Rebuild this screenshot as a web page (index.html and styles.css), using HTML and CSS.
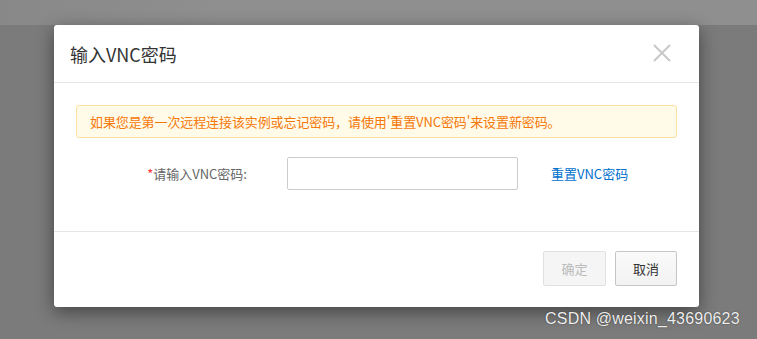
FILE: index.html
```html
<!DOCTYPE html>
<html lang="zh-CN">
<head>
<meta charset="utf-8">
<title>输入VNC密码</title>
<link rel="stylesheet" href="styles.css">
</head>
<body>
<div class="topbar"></div>
<div class="stage">
  <div class="modal">
    <div class="modal-header">
      <h3 class="modal-title">输入VNC密码</h3>
      <span class="close" aria-label="关闭">
        <svg width="18" height="18" viewBox="0 0 18 18"><path d="M1 1L17 17M17 1L1 17" stroke="#c8c8c8" stroke-width="2" fill="none"/></svg>
      </span>
    </div>
    <div class="modal-body">
      <div class="notice">如果您是第一次远程连接该实例或忘记密码，请使用'重置VNC密码'来设置新密码。</div>
      <div class="form-row">
        <label class="form-label"><span class="req">*</span>请输入VNC密码:</label>
        <input class="form-input" type="password">
        <a class="reset-link" href="#">重置VNC密码</a>
      </div>
    </div>
    <div class="modal-footer">
      <button class="btn btn-disabled" disabled>确定</button>
      <button class="btn btn-cancel">取消</button>
    </div>
  </div>
</div>
<div class="watermark">CSDN @weixin_43690623</div>
</body>
</html>
```

FILE: styles.css
```css
* { box-sizing: border-box; }
html, body {
  margin: 0;
  padding: 0;
  height: 100%;
}
body {
  background: #7b7b7b;
  font-family: "Noto Sans CJK SC", "Liberation Sans", sans-serif;
  overflow: hidden;
  position: relative;
}
.topbar {
  height: 25px;
  background: linear-gradient(to right, #888 0%, #8f8f8f 30%, #8f8f8f 100%);
}
.stage {
  padding-left: 54px;
}
.modal {
  width: 645px;
  height: 282px;
  background: #fff;
  border-radius: 3px;
  box-shadow: 0 5px 18px rgba(0, 0, 0, 0.45);
  display: flex;
  flex-direction: column;
}
.modal-header {
  height: 58px;
  border-bottom: 1px solid #e5e5e5;
  display: flex;
  align-items: center;
  justify-content: space-between;
  padding: 0 28px 0 16px;
}
.modal-title {
  margin: 0;
  font-size: 18px;
  font-weight: 400;
  color: #333;
  line-height: 24px;
  padding-top: 0;
}
.close {
  display: flex;
  width: 18px;
  height: 18px;
  margin-top: -2px;
}
.modal-body {
  flex: 1;
  padding: 22px 22px 0 22px;
  border-bottom: 1px solid #e5e5e5;
}
.notice {
  height: 33px;
  border: 1px solid #fbe2a3;
  background: #fffbe8;
  border-radius: 3px;
  padding: 0 13px;
  font-size: 13px;
  line-height: 31px;
  color: #f5780a;
  letter-spacing: -0.1px;
}
.form-row {
  margin-top: 19px;
  display: flex;
  align-items: center;
}
.form-label {
  width: 171px;
  text-align: right;
  font-size: 13px;
  color: #666;
  line-height: 33px;
  margin-right: 40px;
}
.req {
  color: #f33;
}
.form-input {
  width: 231px;
  height: 33px;
  border: 1px solid #ccc;
  border-radius: 2px;
  background: #fff;
  padding: 0 8px;
  margin: 0;
  outline: none;
}
.reset-link {
  margin-left: 33px;
  font-size: 13px;
  color: #0070cc;
  text-decoration: none;
  line-height: 33px;
}
.modal-footer {
  height: 75px;
  display: flex;
  justify-content: flex-end;
  align-items: center;
  padding: 0 22px 3px 0;
  gap: 9px;
}
.btn {
  width: 63px;
  height: 35px;
  border-radius: 2px;
  font-family: "Noto Sans CJK SC", "Liberation Sans", sans-serif;
  font-size: 13px;
  padding: 0;
  margin: 0;
}
.btn-disabled {
  background: #f5f5f5;
  border: 1px solid #e0e0e0;
  color: #bbb;
}
.btn-cancel {
  width: 62px;
  background: linear-gradient(#fafafa, #f2f2f2);
  border: 1px solid #c6c6c6;
  color: #333;
}
.watermark {
  position: absolute;
  left: 545px;
  top: 309px;
  font-family: "Liberation Sans", Arial, sans-serif;
  font-size: 16px;
  line-height: 20px;
  color: #eeeeee;
  text-shadow: 0 0 1px #444, 0 0 1px #444;
  letter-spacing: 0.2px;
}
```
